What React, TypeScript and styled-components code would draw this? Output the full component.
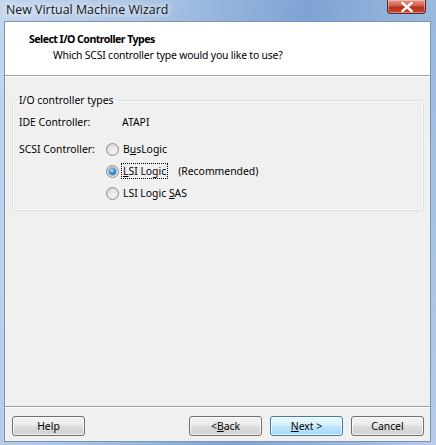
import React from 'react'
import styled, { createGlobalStyle, css } from 'styled-components'

const GlobalStyle = createGlobalStyle`
    html, body {
        margin: 0;
        padding: 0;
        background: #8fb0d8;
    }
    * {
        box-sizing: border-box;
    }
`

const UI_FONT = `"Noto Sans", "Open Sans", "Liberation Sans", sans-serif`

interface RadioProps {
    label: React.ReactNode
    checked?: boolean
    focused?: boolean
    note?: string
}

const Radio = (props: RadioProps) => (
    <RadioRow>
        <RadioDot $checked={props.checked} />
        <RadioLabel $focused={props.focused}>{props.label}</RadioLabel>
        {props.note && <Note>{props.note}</Note>}
    </RadioRow>
)

const App = () => {
    return (
        <>
            <GlobalStyle />
            <Frame>
                <TitleBar>
                    <Caption>New Virtual Machine Wizard</Caption>
                    <CloseButton aria-label="Close">
                        <svg width="12" height="10" viewBox="0 0 12 10">
                            <path d="M1.5 1 L10.5 9 M10.5 1 L1.5 9" stroke="#fff" strokeWidth="2.4" strokeLinecap="square" />
                        </svg>
                    </CloseButton>
                </TitleBar>
                <Client>
                    <Header>
                        <HeaderTitle>Select I/O Controller Types</HeaderTitle>
                        <HeaderSub>Which SCSI controller type would you like to use?</HeaderSub>
                    </Header>
                    <Body>
                        <GroupBox>
                            <Legend>I/O controller types</Legend>
                            <FieldRow>
                                <FieldLabel>IDE Controller:</FieldLabel>
                                <FieldValue>ATAPI</FieldValue>
                            </FieldRow>
                            <FieldRow $top>
                                <FieldLabel>SCSI Controller:</FieldLabel>
                                <RadioList>
                                    <Radio label={<>B<u>u</u>sLogic</>} />
                                    <Radio label={<><u>L</u>SI Logic</>} checked focused note="(Recommended)" />
                                    <Radio label={<>LSI Logic <u>S</u>AS</>} />
                                </RadioList>
                            </FieldRow>
                        </GroupBox>
                    </Body>
                    <Footer>
                        <Button>Help</Button>
                        <Spacer />
                        <Button>&lt; <u>B</u>ack</Button>
                        <Button $default><u>N</u>ext &gt;</Button>
                        <Button>Cancel</Button>
                    </Footer>
                </Client>
            </Frame>
        </>
    )
}
export default App

const Frame = styled.div`
    width: 436px;
    height: 445px;
    padding: 0 5px 3px 4px;
    display: flex;
    flex-direction: column;
    background: linear-gradient(100deg, #c3d6ee 0%, #a9c3e4 30%, #7ea3d3 60%, #9bb9df 85%, #b7cde8 100%);
    font-family: ${UI_FONT};
    font-size: 10.4px;
    color: #000;
`
const TitleBar = styled.div`
    height: 21px;
    display: flex;
    align-items: flex-start;
`
const Caption = styled.div`
    padding: 1px 0 0 2px;
    font-family: "Open Sans", "Noto Sans", sans-serif;
    font-size: 12.4px;
    line-height: 17px;
    color: #151515;
    text-shadow: 0 0 6px #ffffff, 0 0 10px rgba(255, 255, 255, 0.9);
`
const CloseButton = styled.div`
    margin-left: auto;
    margin-right: 5px;
    width: 39px;
    height: 14px;
    display: flex;
    align-items: center;
    justify-content: center;
    border: 1px solid #5a2a24;
    border-top: none;
    border-radius: 0 0 4px 4px;
    background: linear-gradient(#e39b8c 0%, #cf5a45 45%, #b72f1a 55%, #c8462f 100%);
    box-shadow: inset 0 0 0 1px rgba(255, 220, 210, 0.45);
`
const Client = styled.div`
    flex: 1;
    display: flex;
    flex-direction: column;
    background: #f0f0f0;
    border: 1px solid #7f93b0;
`
const Header = styled.div`
    height: 54px;
    padding: 9px 0 0 24px;
    background: #fff;
    border-bottom: 1px solid #a0a0a0;
    box-shadow: 0 1px 0 #fff;
`
const HeaderTitle = styled.div`
    font-size: 10.6px;
    font-weight: bold;
    letter-spacing: -0.55px;
    line-height: 16px;
`
const HeaderSub = styled.div`
    padding-left: 24px;
    letter-spacing: -0.18px;
    line-height: 16px;
`
const Body = styled.div`
    flex: 1;
    padding: 17px 6px 0 7px;
`
const GroupBox = styled.fieldset`
    margin: 0;
    padding: 2px 7px 9px 6px;
    border: 1px solid #d5dfe5;
    border-radius: 3px;
    box-shadow: inset 0 0 0 1px #fff;
`
const Legend = styled.legend`
    margin-left: -2px;
    padding: 0 2px;
    line-height: 14px;
`
const FieldRow = styled.div<{ $top?: boolean }>`
    display: flex;
    align-items: flex-start;
    margin-top: ${(p) => (p.$top ? '11px' : '5px')};
`
const FieldLabel = styled.div`
    width: 87px;
    line-height: 16px;
`
const FieldValue = styled.div`
    padding-left: 16px;
    line-height: 16px;
`
const RadioList = styled.div`
    display: flex;
    flex-direction: column;
    gap: 6px;
`
const RadioRow = styled.div`
    display: flex;
    align-items: center;
    height: 16px;
`
const RadioDot = styled.span<{ $checked?: boolean }>`
    position: relative;
    width: 13px;
    height: 13px;
    margin-right: 2px;
    border-radius: 50%;
    border: 1px solid #8c8f94;
    background: radial-gradient(circle at 60% 65%, #f6f6f6 0%, #e2e2e2 55%, #c9c9c9 100%);
    ${(p) =>
        p.$checked &&
        css`
            &::after {
                content: '';
                position: absolute;
                left: 2px;
                top: 2px;
                width: 7px;
                height: 7px;
                border-radius: 50%;
                background: radial-gradient(circle at 40% 35%, #b9e3ff 0%, #3a8fd0 45%, #124e85 100%);
                box-shadow: 0 0 0 1px rgba(40, 90, 140, 0.35);
            }
        `}
`
const RadioLabel = styled.span<{ $focused?: boolean }>`
    padding: 0 1px;
    line-height: 14px;
    border: 1px dotted ${(p) => (p.$focused ? '#000' : 'transparent')};
`
const Note = styled.span`
    margin-left: 10px;
    line-height: 14px;
`
const Footer = styled.div`
    height: 35px;
    display: flex;
    align-items: flex-start;
    gap: 8px;
    padding: 9px 6px 0 7px;
    border-top: 1px solid #a0a0a0;
    box-shadow: inset 0 1px 0 #fff;
`
const Spacer = styled.div`
    flex: 1;
`
const Button = styled.div<{ $default?: boolean }>`
    width: 73px;
    height: 20px;
    display: flex;
    align-items: center;
    justify-content: center;
    border: 1px solid ${(p) => (p.$default ? '#3c7fb1' : '#707070')};
    border-radius: 3px;
    background: ${(p) =>
        p.$default
            ? 'linear-gradient(#eaf6fd 0%, #d9f0fc 45%, #bee6fd 50%, #a7d9f5 100%)'
            : 'linear-gradient(#f2f2f2 0%, #ebebeb 45%, #dddddd 50%, #cfcfcf 100%)'};
    box-shadow: inset 0 0 0 1px rgba(255, 255, 255, 0.75);
`
